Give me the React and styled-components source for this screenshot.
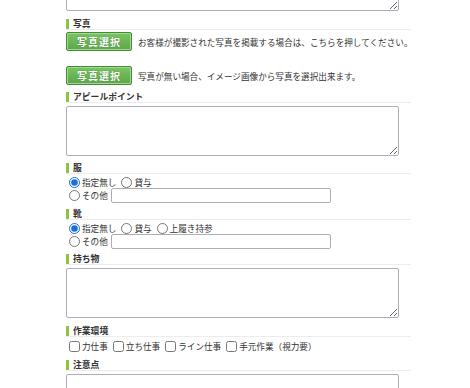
import React from "react"
import styled, { createGlobalStyle } from "styled-components"

const GlobalStyle = createGlobalStyle`
  body {
    margin: 0;
    background: #fff;
    font-family: "Noto Sans CJK JP", "Noto Sans", sans-serif;
    color: #333;
    overflow: hidden;
  }
`

const Form = styled.div`
  width: 345px;
  padding-left: 66px;
  display: flex;
  flex-direction: column;
  font-size: 8.6px;
  line-height: 12px;
`

const Area = styled.textarea`
  display: block;
  box-sizing: border-box;
  width: 333px;
  height: ${(p) => p.$h || 50}px;
  margin: ${(p) => p.$mt || 0}px 0 0;
  border: 1px solid #aeaebb;
  border-radius: 2px;
  resize: vertical;
  font: inherit;
`

const Heading = styled.div`
  display: flex;
  align-items: center;
  height: 11px;
  margin-top: ${(p) => p.$mt || 6}px;
  border-bottom: 1px solid #ececec;
  span {
    border-left: 3px solid #8cc63f;
    padding-left: 4px;
    line-height: 10px;
    font-weight: 700;
    font-size: 8.8px;
  }
`

const ButtonRow = styled.div`
  display: flex;
  align-items: center;
  gap: 6px;
  height: 19px;
  white-space: nowrap;
  margin-top: ${(p) => p.$mt || 0}px;
`

const GreenButton = styled.button`
  box-sizing: border-box;
  flex: none;
  width: 66px;
  height: 19px;
  padding: 0;
  border: 1px solid #3f8d3a;
  border-radius: 2px;
  background: linear-gradient(#7cc462, #5ca649);
  box-shadow: inset 0 0 0 1px #a6d78f;
  color: #fff;
  font-family: "Noto Sans CJK JP", sans-serif;
  font-weight: 700;
  font-size: 10px;
  letter-spacing: 1px;
  text-shadow: 0 0 1px #2f6f2a;
  cursor: pointer;
`

const Row = styled.div`
  display: flex;
  align-items: center;
  height: ${(p) => p.$h || 12}px;
  margin-top: ${(p) => p.$mt || 0}px;
  padding-left: 3px;
`

const Choice = styled.label`
  display: flex;
  align-items: center;
  margin-right: ${(p) => p.$gap ?? 5}px;
  white-space: nowrap;
  line-height: 11px;
  input {
    width: 11px;
    height: 11px;
    margin: 0 2px 0 0;
    accent-color: #1a6fe0;
  }
`

const TextInput = styled.input`
  box-sizing: border-box;
  width: 220px;
  height: 15px;
  margin-left: -2px;
  border: 1px solid #aeaebb;
  border-radius: 2px;
  padding: 0 3px;
  font: inherit;
`

const Radios = ({ name, options, other }) => (
  <>
    <Row $h={11} $mt={3}>
      {options.map((o, i) => (
        <Choice key={o}>
          <input type="radio" name={name} defaultChecked={i === 0} />
          {o}
        </Choice>
      ))}
    </Row>
    {other && (
      <Row $h={15}>
        <Choice>
          <input type="radio" name={name} />
          その他
        </Choice>
        <TextInput type="text" />
      </Row>
    )}
  </>
)

const jobs = ["力仕事", "立ち仕事", "ライン仕事", "手元作業（視力要）"]

const App = () => {
  return (
    <>
      <GlobalStyle />
      <Form>
        <Area $mt={-39} />

        <Heading $mt={7}><span>写真</span></Heading>
        <ButtonRow $mt={2}>
          <GreenButton>写真選択</GreenButton>
          お客様が撮影された写真を掲載する場合は、こちらを押してください。
        </ButtonRow>
        <ButtonRow $mt={15}>
          <GreenButton>写真選択</GreenButton>
          写真が無い場合、イメージ画像から写真を選択出来ます。
        </ButtonRow>

        <Heading><span>アピールポイント</span></Heading>
        <Area $mt={3} />

        <Heading><span>服</span></Heading>
        <Radios name="clothes" options={["指定無し", "貸与"]} other />

        <Heading $mt={5}><span>靴</span></Heading>
        <Radios name="shoes" options={["指定無し", "貸与", "上履き持参"]} other />

        <Heading $mt={4}><span>持ち物</span></Heading>
        <Area $mt={3} />

        <Heading $mt={7}><span>作業環境</span></Heading>
        <Row $mt={3}>
          {jobs.map((j) => (
            <Choice key={j} $gap={5}>
              <input type="checkbox" />
              {j}
            </Choice>
          ))}
        </Row>

        <Heading $mt={7}><span>注意点</span></Heading>
        <Area $mt={3} />
      </Form>
    </>
  )
}

export default App
